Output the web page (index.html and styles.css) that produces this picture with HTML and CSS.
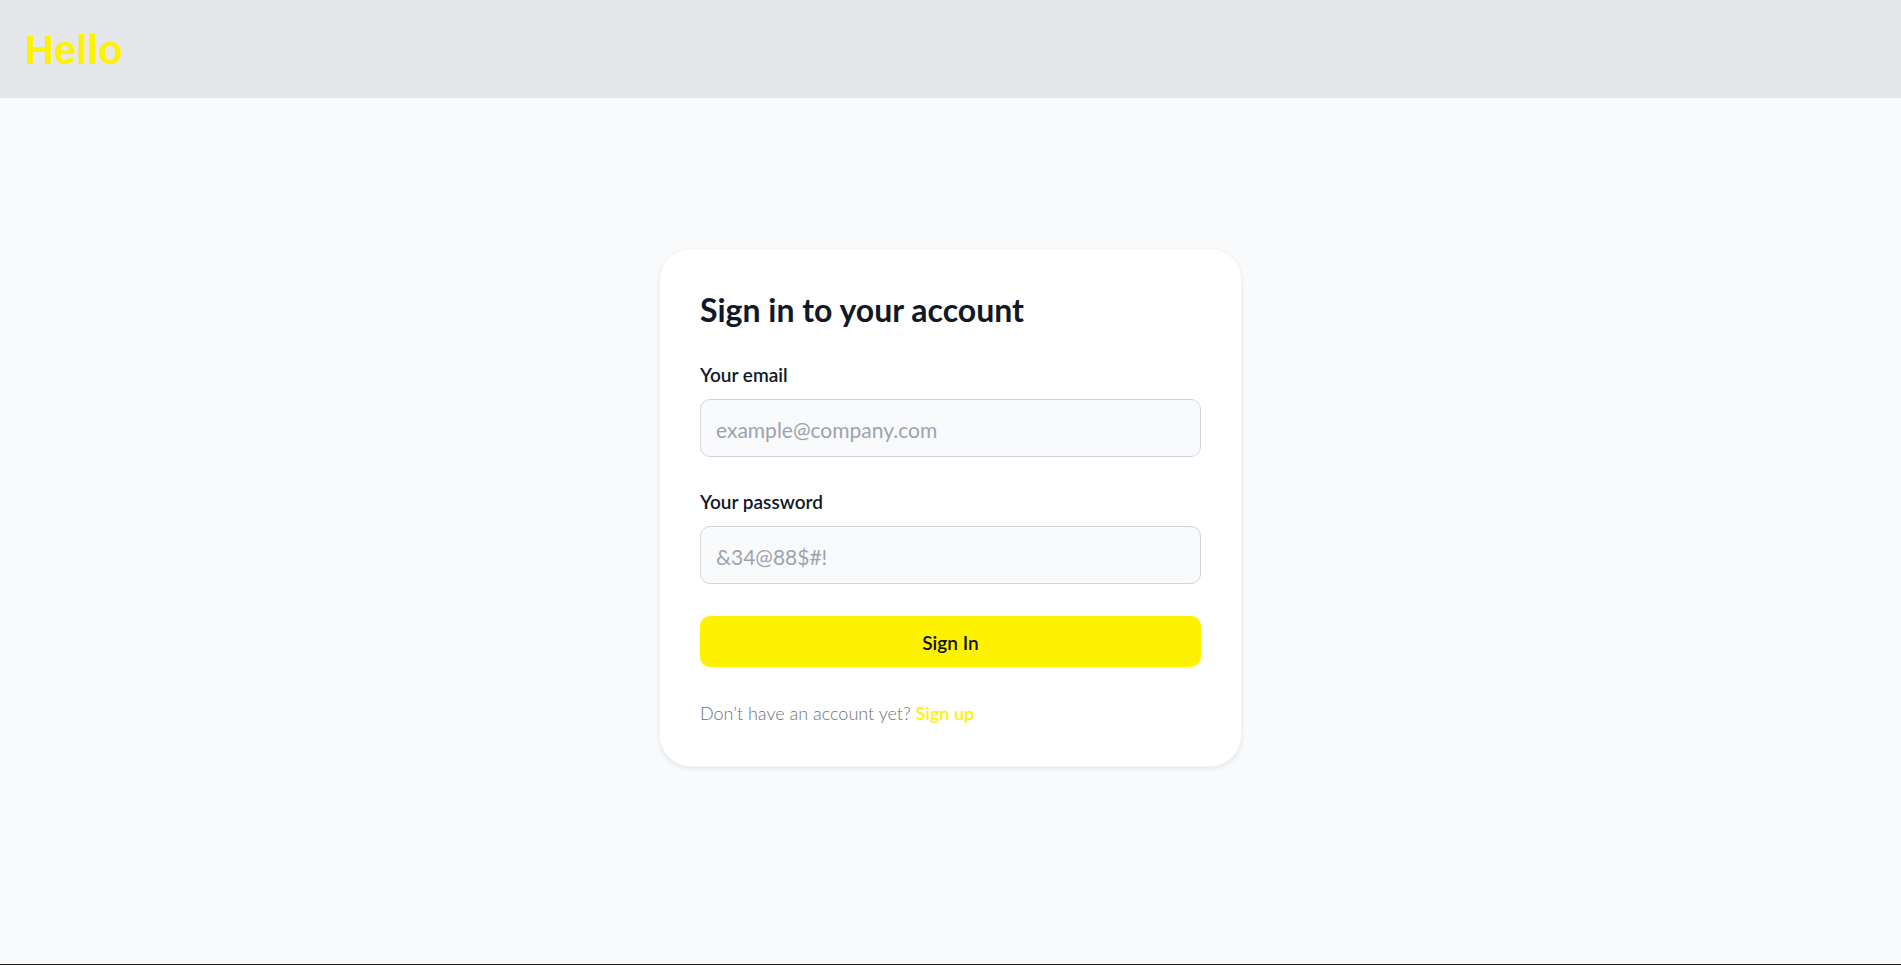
FILE: index.html
```html
<!DOCTYPE html>
<html lang="en">
<head>
    <meta charset="UTF-8">
    <meta name="viewport" content="width=device-width, initial-scale=1.0">
    <title>Sign in</title>
    <link rel="stylesheet" href="styles.css">
</head>
<body>
    <div class="page">
        <!-- top bar -->
        <header class="top-bar">
            <span class="brand">Hello</span>
        </header>

        <!-- login card -->
        <main class="main">
            <div class="login-card">
                <h1 class="login-title">Sign in to your account</h1>

                <form class="login-form">
                    <div class="field">
                        <label for="email">Your email</label>
                        <input type="email" id="email" placeholder="example@company.com">
                    </div>

                    <div class="field">
                        <label for="password">Your password</label>
                        <input type="password" id="password" placeholder="&amp;34@88$#!">
                    </div>

                    <button type="submit" class="btn-signin">Sign In</button>

                    <p class="signup-text">Don’t have an account yet? <a href="#" class="signup-link">Sign up</a></p>
                </form>
            </div>
        </main>
    </div>
</body>
</html>
```

FILE: styles.css
```css
body {
    margin: 0;
    padding: 0;
    background-color: #f9fafb;
    font-family: Lato, "Noto Sans", sans-serif;
    color: #111827;
}

.page {
    min-height: 100vh;
    box-sizing: border-box;
    border-bottom: 1px solid #1b1b1b;
    display: flex;
    flex-direction: column;
}

.top-bar {
    height: 98px;
    background-color: #e5e7eb;
    display: flex;
    align-items: center;
    padding-left: 25px;
}

.brand {
    font-family: "Liberation Sans", Arial, sans-serif;
    font-weight: bold;
    font-size: 40px;
    line-height: 1;
    padding-top: 2px;
    color: #fff200;
}

.main {
    display: flex;
    justify-content: center;
    padding-top: 150px;
}

.login-card {
    width: 583px;
    box-sizing: border-box;
    background-color: #fff;
    border: 1px solid #f3f4f6;
    border-radius: 32px;
    box-shadow: 0 2px 4px rgba(0, 0, 0, 0.08);
    padding: 42px 40px 41px;
}

.login-title {
    margin: 0;
    font-size: 32px;
    line-height: 38px;
    font-weight: 700;
    color: #111827;
}

.login-form {
    display: flex;
    flex-direction: column;
    gap: 32px;
    margin-top: 33px;
}

.field {
    display: flex;
    flex-direction: column;
    gap: 12px;
}

.field label {
    font-size: 19px;
    line-height: 25px;
    font-weight: 600;
}

.field input {
    height: 58px;
    box-sizing: border-box;
    border: 1px solid #d1d5db;
    border-radius: 10px;
    background-color: #f9fafb;
    padding: 2px 15px 0;
    font-family: inherit;
    font-size: 21px;
    color: #111827;
}

.field input::placeholder {
    color: #9ca3af;
}

.btn-signin {
    height: 51px;
    border: none;
    border-radius: 10px;
    background-color: #fff200;
    padding-top: 2px;
    font-family: inherit;
    font-size: 19px;
    font-weight: 600;
    color: #111;
}

.signup-text {
    margin: 2px 0 0;
    font-size: 18px;
    line-height: 24px;
    font-weight: 300;
    color: #6b7280;
}

.signup-link {
    color: #fff200;
    font-weight: 600;
    text-decoration: none;
}
```
